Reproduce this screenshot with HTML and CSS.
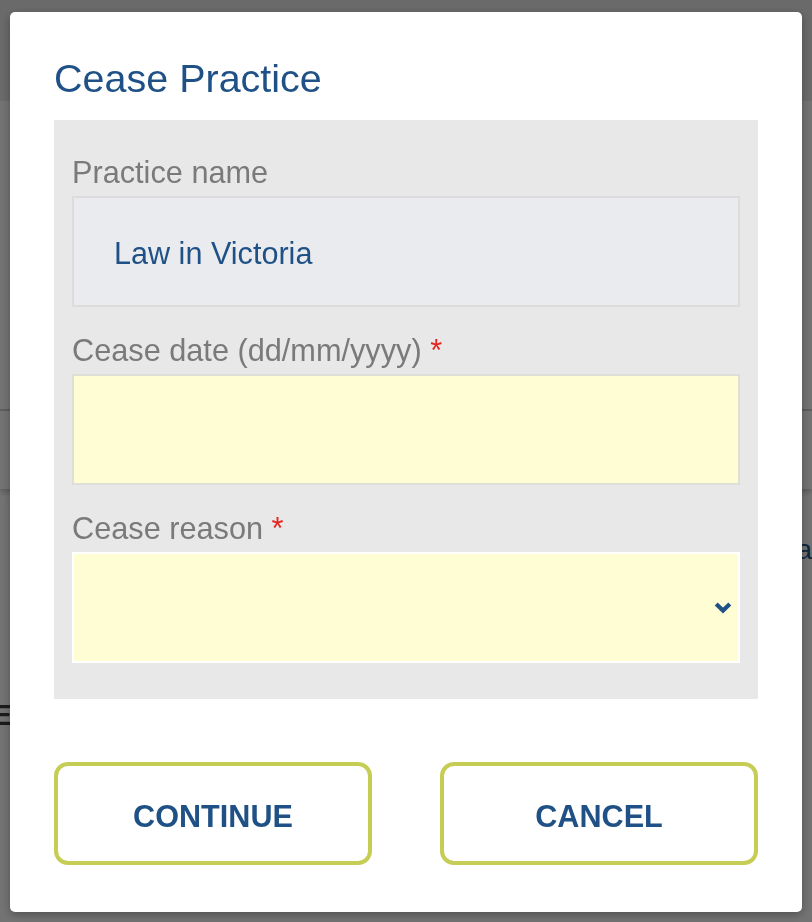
FILE: index.html
```html
<!DOCTYPE html>
<html lang="en">
<head>
<meta charset="utf-8">
<title>Cease Practice</title>
<link rel="stylesheet" href="styles.css">
</head>
<body>
<div class="page">
  <div class="page-header"></div>
  <div class="page-section"></div>
  <div class="page-toolbar"></div>
  <div class="page-content">
    <div class="page-row page-row-right"><span class="bg-link">a</span></div>
    <div class="page-row page-row-left"><span class="bg-heading">E</span></div>
  </div>
</div>
<div class="overlay"></div>
<div class="modal" role="dialog" aria-labelledby="modal-title">
  <h1 class="modal-title" id="modal-title">Cease Practice</h1>
  <div class="form-panel">
    <div class="field">
      <label class="field-label">Practice name</label>
      <div class="input input-readonly"><span class="input-value">Law in Victoria</span></div>
    </div>
    <div class="field">
      <label class="field-label">Cease date (dd/mm/yyyy) <span class="required">*</span></label>
      <div class="input input-required"></div>
    </div>
    <div class="field">
      <label class="field-label">Cease reason <span class="required">*</span></label>
      <div class="input input-required input-select">
        <svg class="chevron" width="20" height="13" viewBox="0 0 20 13" aria-hidden="true">
          <path d="M3.2 3 L10 9.6 L16.8 3" fill="none" stroke="#1f5186" stroke-width="4.2" stroke-linecap="butt" stroke-linejoin="miter"/>
        </svg>
      </div>
    </div>
  </div>
  <div class="actions">
    <button class="btn btn-continue" type="button">CONTINUE</button>
    <button class="btn btn-cancel" type="button">CANCEL</button>
  </div>
</div>
</body>
</html>
```
FILE: styles.css
```css
html, body {
  margin: 0;
  padding: 0;
}

body {
  width: 812px;
  height: 922px;
  overflow: hidden;
  font-family: "Liberation Sans", Arial, Helvetica, sans-serif;
  background: #ffffff;
}

/* Background page (under the overlay) */
.page {
  display: flex;
  flex-direction: column;
  height: 922px;
}

.page-header {
  height: 101px;
  background: #ebebeb;
  flex: 0 0 auto;
}

.page-section {
  height: 308px;
  background: #ffffff;
  border-bottom: 2px solid #d3d3d3;
  flex: 0 0 auto;
}

.page-toolbar {
  height: 78px;
  background: #ffffff;
  box-shadow: 0 3px 6px rgba(0, 0, 0, 0.22);
  position: relative;
  flex: 0 0 auto;
}

.page-content {
  flex: 1 1 auto;
  background: #ffffff;
  display: flex;
  flex-direction: column;
  padding-top: 44px;
}

.page-row {
  display: flex;
  height: 34px;
  align-items: center;
}

.page-row-right {
  justify-content: flex-end;
}

.page-row-left {
  justify-content: flex-start;
  margin-top: 131px;
}

.bg-link {
  font-size: 28px;
  color: #24588c;
  margin-right: 0;
}

.bg-heading {
  font-size: 30px;
  font-weight: bold;
  color: #3c3c3c;
  margin-left: -8px;
}

/* Overlay */
.overlay {
  position: fixed;
  inset: 0;
  background: rgba(0, 0, 0, 0.55);
}

/* Modal */
.modal {
  position: fixed;
  top: 12px;
  left: 10px;
  width: 792px;
  height: 900px;
  box-sizing: border-box;
  background: #ffffff;
  border-radius: 5px;
  padding: 43px 44px 0;
  box-shadow: 0 3px 10px rgba(0, 0, 0, 0.3);
}

.modal-title {
  margin: 0 0 18px;
  font-size: 39.5px;
  line-height: 47px;
  font-weight: normal;
  color: #1f5186;
}

.form-panel {
  background: #e8e8e8;
  padding: 35px 18px 36px;
}

.field + .field {
  margin-top: 26px;
}

.field-label {
  display: block;
  font-size: 30.7px;
  line-height: 36px;
  color: #7a7a7a;
  margin-bottom: 5px;
}

.required {
  color: #e3261f;
}

.input {
  box-sizing: border-box;
  height: 111px;
  border: 2px solid #dcdcdc;
  display: flex;
  align-items: center;
}

.input-readonly {
  background: #eaebef;
  padding: 4px 40px 0;
}

.input-value {
  font-size: 30.6px;
  color: #1f5186;
}

.input-required {
  background: #fefdd3;
  border-color: #dedfd6;
}

.input-select {
  border-color: #ffffff;
  justify-content: flex-end;
  padding-right: 5px;
}

.chevron {
  display: block;
}

/* Actions */
.actions {
  display: flex;
  justify-content: space-between;
  margin-top: 63px;
}

.btn {
  flex: 0 0 318px;
  height: 103px;
  box-sizing: border-box;
  background: #ffffff;
  border: 4px solid #c6cd55;
  border-radius: 14px;
  font-family: "Liberation Sans", Arial, Helvetica, sans-serif;
  font-size: 30.6px;
  font-weight: bold;
  color: #1f5186;
  padding: 5px 0 0;
  cursor: pointer;
}
```
